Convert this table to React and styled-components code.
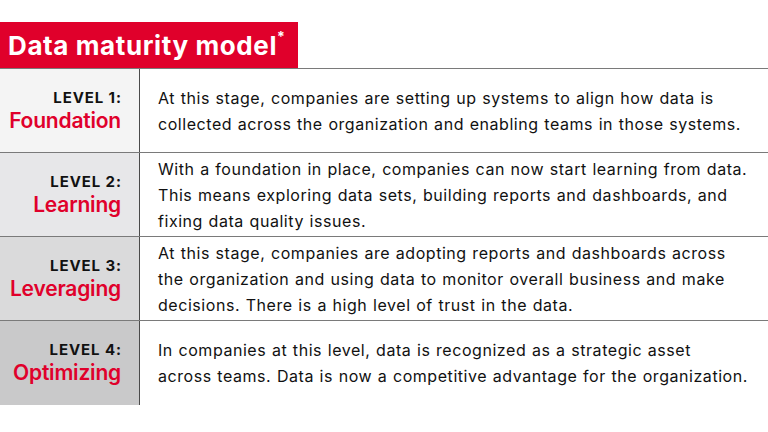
import React from "react"
import styled, { createGlobalStyle } from "styled-components"

const GlobalStyle = createGlobalStyle`
  html, body {
    margin: 0;
    padding: 0;
    background: #fff;
  }
  body {
    font-family: Inter, "Liberation Sans", sans-serif;
    color: #111;
  }
`

const levels = [
  {
    level: "LEVEL 1:",
    name: "Foundation",
    bg: "#f4f4f4",
    lines: [
      "At this stage, companies are setting up systems to align how data is",
      "collected across the organization and enabling teams in those systems.",
    ],
  },
  {
    level: "LEVEL 2:",
    name: "Learning",
    bg: "#e7e7e9",
    lines: [
      "With a foundation in place, companies can now start learning from data.",
      "This means exploring data sets, building reports and dashboards, and",
      "fixing data quality issues.",
    ],
  },
  {
    level: "LEVEL 3:",
    name: "Leveraging",
    bg: "#dadadb",
    lines: [
      "At this stage, companies are adopting reports and dashboards across",
      "the organization and using data to monitor overall business and make",
      "decisions. There is a high level of trust in the data.",
    ],
  },
  {
    level: "LEVEL 4:",
    name: "Optimizing",
    bg: "#c9c9ca",
    lines: [
      "In companies at this level, data is recognized as a strategic asset",
      "across teams. Data is now a competitive advantage for the organization.",
    ],
  },
]

const App = () => {
  return (
    <Page>
      <GlobalStyle />
      <Title>
        Data maturity model<sup>*</sup>
      </Title>
      <Table>
        {levels.map((l, i) => (
          <Row key={i} last={i === levels.length - 1}>
            <Label bg={l.bg}>
              <Level>{l.level}</Level>
              <Name>{l.name}</Name>
            </Label>
            <Desc>
              {l.lines.map((line, j) => (
                <Line key={j}>{line}</Line>
              ))}
            </Desc>
          </Row>
        ))}
      </Table>
    </Page>
  )
}

export default App

const Page = styled.div`
  width: 768px;
  height: 432px;
  padding-top: 22px;
  box-sizing: border-box;
  overflow: hidden;
`

const Title = styled.h1`
  margin: 0;
  width: 298px;
  height: 46px;
  box-sizing: border-box;
  background: #e0002b;
  color: #fff;
  font-size: 26px;
  font-weight: 700;
  letter-spacing: 0.6px;
  padding: 8px 0 0 8px;
  line-height: 32px;
  white-space: nowrap;

  sup {
    font-size: 14px;
    vertical-align: top;
    line-height: 14px;
    margin-left: 0;
  }
`

const Table = styled.div`
  display: flex;
  flex-direction: column;
  border-top: 1px solid #7a7a7a;
  width: 768px;
`

const Row = styled.div`
  display: grid;
  grid-template-columns: 140px 1fr;
  height: ${props => (props.last ? "84px" : "83px")};
  border-bottom: ${props => (props.last ? "none" : "1px solid #7a7a7a")};
`

const Label = styled.div`
  background: ${props => props.bg};
  border-right: 1px solid #4a4a4a;
  display: flex;
  flex-direction: column;
  align-items: flex-end;
  justify-content: center;
  padding-right: 18px;
`

const Level = styled.div`
  font-size: 15px;
  font-weight: 700;
  line-height: 19px;
  color: #111;
  letter-spacing: 0.9px;
  margin-right: -0.9px;
`

const Name = styled.div`
  font-size: 21px;
  font-weight: 600;
  line-height: 27px;
  color: #e0002b;
  letter-spacing: -0.2px;
`

const Desc = styled.div`
  display: flex;
  flex-direction: column;
  justify-content: center;
  padding: 0 0 0 18px;
  font-size: 16px;
  line-height: 26px;
  letter-spacing: 0.55px;
  word-spacing: 0.6px;
  color: #111;
`

const Line = styled.span`
  display: block;
  white-space: nowrap;
`
